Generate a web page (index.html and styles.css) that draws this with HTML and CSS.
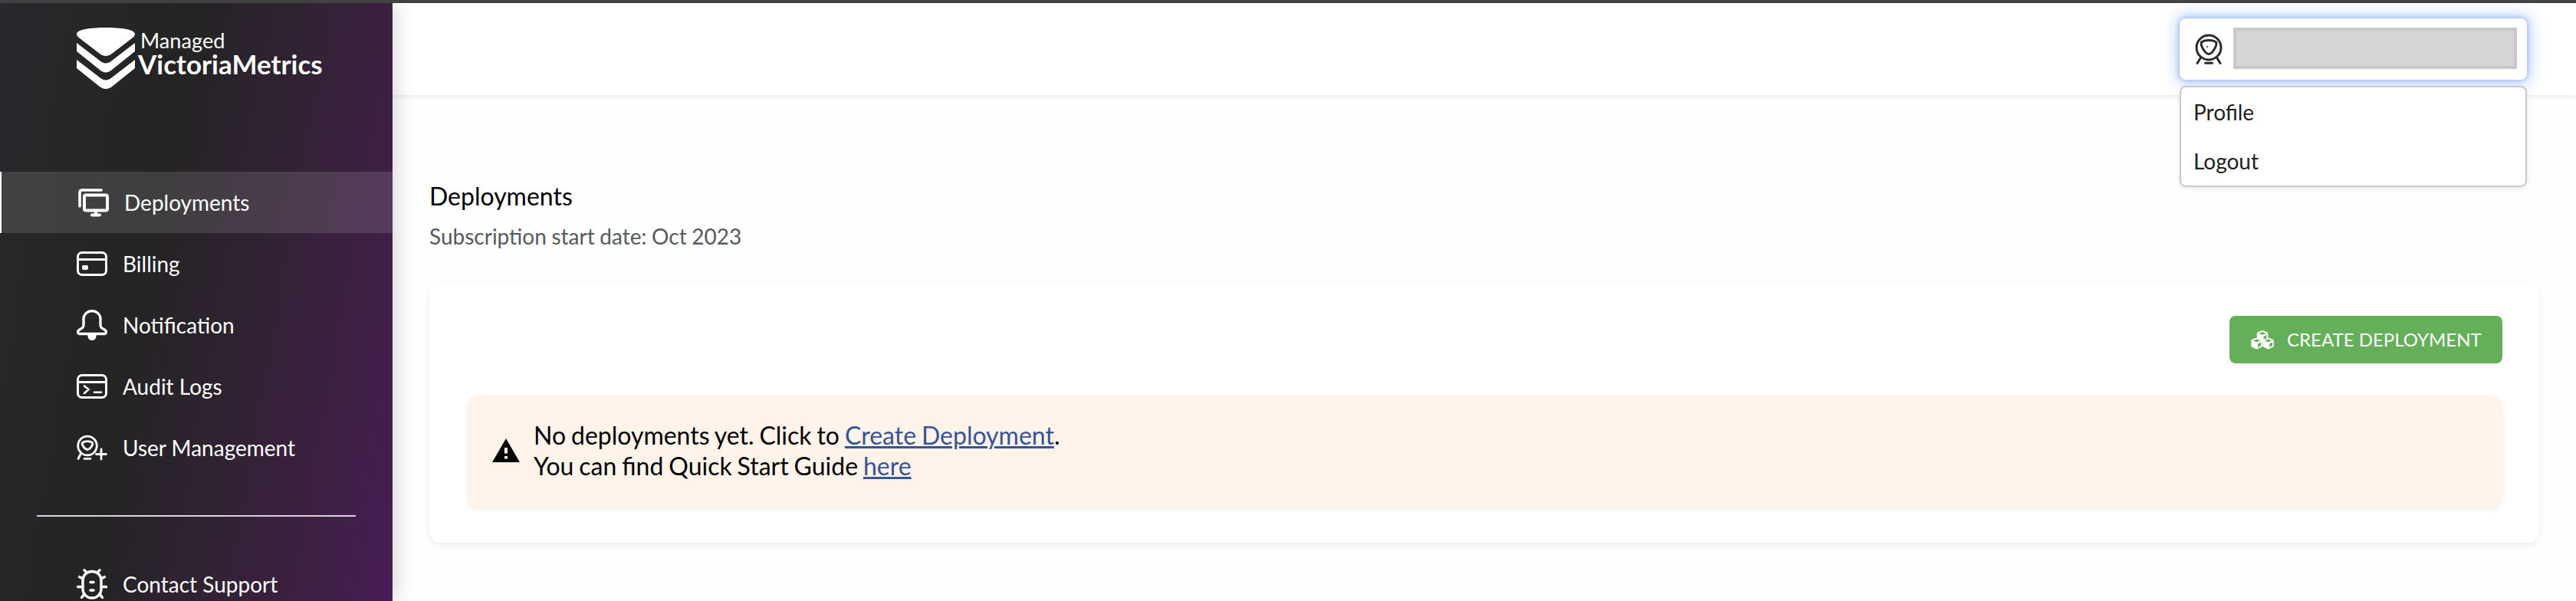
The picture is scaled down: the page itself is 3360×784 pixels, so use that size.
FILE: index.html
```html
<!DOCTYPE html>
<html lang="en">
<head>
<meta charset="utf-8">
<title>Managed VictoriaMetrics</title>
<link rel="stylesheet" href="styles.css">
</head>
<body>
<div class="app">
  <aside class="sidebar">
    <div class="brand">
      <svg class="brand-mark" viewBox="0 0 76 80" fill="#fff">
        <path d="M0 8C1 2 20 0 38 0s37 2 38 8c0 2-1 4-4 6L46 34c-5 4-11 4-16 0L4 14C1 12 0 10 0 8z"/>
        <path d="M0 20l30 23c5 4.500 11 4.500 16 0l30-23v11L46 55c-5 4.500-11 4.500-16 0L0 31z"/>
        <path d="M0 42l30 23c5 4.500 11 4.500 16 0l30-23v11L46 77c-5 4-11 4-16 0L0 53z"/>
      </svg>
      <div class="brand-name"><span class="brand-top">Managed</span><span class="brand-main">VictoriaMetrics</span></div>
    </div>
    <nav class="nav">
      <a class="nav-item active">
        <svg class="icon" viewBox="0 0 40 40" fill="none" stroke="#fff" stroke-width="4" stroke-linecap="round" stroke-linejoin="round"><path d="M2 25V7q0-3 3-3h25" stroke-width="3.600"/><rect x="8" y="10.500" width="30" height="20" rx="2"/><path d="M23 31v5M18 36.500h10"/></svg>
        <span>Deployments</span></a>
      <a class="nav-item">
        <svg class="icon" viewBox="0 0 40 40" fill="none" stroke="#fff" stroke-width="3"><rect x="1.500" y="5.500" width="37" height="29" rx="5.500"/><path d="M2 14.500h36"/><rect x="7" y="22" width="8" height="6" rx="2" fill="#fff" stroke="none"/></svg>
        <span>Billing</span></a>
      <a class="nav-item">
        <svg class="icon" viewBox="0 0 40 40" fill="none" stroke="#fff" stroke-width="3.300" stroke-linejoin="round"><path d="M9 20v-7.500C9 6 14 1.700 20 1.700S31 6 31 12.500V20c0 3 2 4.500 4.500 5.500 4.500 2 3.500 6 0 6H4.500c-3.500 0-4.500-4 0-6C7 24.500 9 23 9 20z"/><path d="M14.500 32h11v2.500a5.500 5.500 0 0 1-11 0z" fill="#fff" stroke="none"/></svg>
        <span>Notification</span></a>
      <a class="nav-item">
        <svg class="icon" viewBox="0 0 40 40" fill="none" stroke="#fff" stroke-width="3"><rect x="1.500" y="5.500" width="37" height="29" rx="5.500"/><path d="M2 14.500h36"/><path d="M10 19.500l5.500 4.500-5.500 5M23 27.800h9" stroke-width="2.600" stroke-linecap="round"/></svg>
        <span>Audit Logs</span></a>
      <a class="nav-item">
        <svg class="icon" viewBox="0 0 40 40" fill="none" stroke="#fff" stroke-width="2.800" stroke-linecap="round" stroke-linejoin="round"><circle cx="14" cy="17.500" r="12.300"/><path d="M7.500 13.500c3-2.500 10-2.500 13 0 1.500 2-3 9-6.500 9S6 15.500 7.500 13.500z"/><path d="M5.500 27.500L2 34.500M10 34.300h8M25.500 28.500h13M32 22v13"/></svg>
        <span>User Management</span></a>
    </nav>
    <hr class="divider">
    <nav class="nav">
      <a class="nav-item">
        <svg class="icon" viewBox="0 0 40 40" fill="none" stroke="#fff" stroke-width="3.400" stroke-linecap="round"><rect x="8" y="3.500" width="24" height="34.500" rx="11.500"/><path d="M13 5l-3-3.300M27 5l3-3.300M8 13l-4.500-2.500M32 13l4.500-2.500M8 23.500H1.500M32 23.500h7M10 33l-3.500 4.500M30 33l3.500 4.500M18 17.500h4M18 28h4"/></svg>
        <span>Contact Support</span></a>
    </nav>
  </aside>
  <div class="content">
    <header class="topbar">
      <div class="account">
        <button class="account-button">
          <svg class="account-icon" viewBox="0 0 36 42" fill="none" stroke="#2b2b2b" stroke-width="3" stroke-linecap="round"><circle cx="18" cy="19" r="16"/><path d="M8.500 12c4-3.500 15-3.500 19 0 2 4-5 15.500-9.500 15.500S6.500 16 8.500 12z"/><path d="M7 33l-4 6.500M29 33l4 6.500M13.500 39.300h9"/><circle cx="16" cy="18" r="1" fill="#2b2b2b" stroke="none"/></svg>
          <span class="account-name"></span>
        </button>
        <div class="menu"><a>Profile</a><a>Logout</a></div>
      </div>
    </header>
    <main class="main">
      <h1>Deployments</h1>
      <p class="sub">Subscription start date: Oct 2023</p>
      <section class="card">
        <button class="create">
          <svg class="cubes" viewBox="0 0 30 26">
            <defs><g id="cube"><path d="M0-7.500Q.5-7.500 6-5.200 7.300-4.600 7.300-3.500V3Q7.300 4 6.500 4.500L.8 7.300Q0 7.600-.8 7.300L-6.500 4.500Q-7.300 4-7.300 3v-6.500Q-7.300-4.600-6-5.200-.5-7.500 0-7.500z" fill="#fff"/><path d="M0-5.600L4.600-3.700 0-1.700-4.600-3.700zM1.600.4L5.500-1.400V2.800L1.600 4.900z" fill="#65af5a"/></g></defs>
            <use href="#cube" x="15" y="8.500"/><use href="#cube" x="7.500" y="18"/><use href="#cube" x="22.500" y="18"/>
          </svg>
          <span>CREATE DEPLOYMENT</span>
        </button>
        <div class="alert">
          <svg class="warn" viewBox="0 0 36 31"><path d="M18 0l18 31H0z" fill="#080808"/><path d="M16 12h4v7.500h-4zM16 23h4v3.500h-4z" fill="#fff3ea"/></svg>
          <div class="alert-text">No deployments yet. Click to <a>Create Deployment</a>.<br>You can find Quick Start Guide <a>here</a></div>
        </div>
      </section>
    </main>
  </div>
</div>
</body>
</html>
```
FILE: styles.css
```css
* { box-sizing: border-box; }
body { margin: 0; font-family: Lato, sans-serif; background: #fefefe; color: #000; }
button { font: inherit; border: 0; }
.app { display: flex; height: 784px; border-top: 4px solid #424242; overflow: hidden; }
.sidebar { flex: none; width: 512px; color: #fff; background: linear-gradient(100deg, #27292c 0%, #242424 38%, #38213c 75%, #481d55 100%); box-shadow: 4px 0 24px rgba(0,0,0,.17); z-index: 1; }
.brand { display: flex; height: 220px; padding: 32px 0 0 100px; }
.brand-mark { width: 76px; height: 80px; }
.brand-name { display: flex; flex-direction: column; padding-top: 2px; }
.brand-top { font-size: 27.200px; line-height: 29px; padding-left: 7px; }
.brand-main { font-size: 35px; line-height: 33px; font-weight: 700; padding-left: 4px; }
.nav-item { display: flex; align-items: center; height: 80px; padding-left: 100px; gap: 20px; font-size: 28px; }
.nav-item.active { background: rgba(255,255,255,.12); border-left: 2px solid #fff; }
.icon { width: 40px; height: 40px; flex: none; }
.divider { height: 2px; border: 0; margin: 48px 48px; background: #ddd0df; }
.content { flex: 1; display: flex; flex-direction: column; }
.topbar { height: 120px; background: #fff; display: flex; justify-content: flex-end; padding: 20px 64px 0 0; box-shadow: 0 2px 6px rgba(40,20,50,.09); }
.account { position: relative; width: 453px; height: 80px; z-index: 2; }
.account-button { display: flex; align-items: center; width: 100%; height: 80px; padding: 0 13px 0 20px; gap: 14px; background: #fff; border-radius: 8px; box-shadow: 0 0 6px 1px rgba(115,150,240,.6), 0 0 18px 6px rgba(145,190,255,.5); }
.account-icon { width: 36px; height: 42px; flex: none; }
.account-name { flex: 1; height: 54px; background: #d5d5d5; border: 4px solid #c8c8c8; margin-bottom: 2px; }
.menu { position: absolute; top: 88px; left: 0; width: 453px; height: 132px; background: #fff; border: 2px solid #cbc8cd; border-radius: 8px; box-shadow: 0 2px 8px rgba(0,0,0,.08); }
.menu a { display: block; height: 64px; line-height: 64px; padding-left: 16px; font-size: 28px; color: #212121; }
.main { padding: 109px 48px 0; }
h1 { margin: 0; font-size: 32px; line-height: 46px; font-weight: 400; }
.sub { margin: 0; padding-top: 9px; font-size: 28px; line-height: 40px; color: #555b5c; word-spacing: -.6px; }
.card { margin-top: 40px; height: 340px; padding: 44px 48px 0; display: flex; flex-direction: column; align-items: flex-end; background: #fff; border-radius: 16px; box-shadow: 0 4px 10px rgba(0,0,0,.07); }
.create { display: flex; align-items: center; width: 356px; height: 62px; padding: 0 0 0 28px; gap: 17px; border-radius: 8px; background: #65af5a; color: #fff; font-size: 24px; }
.create span { margin-top: -2px; }
.cubes { width: 30px; height: 26px; flex: none; }
.alert { display: flex; align-self: stretch; height: 147px; margin: 42px 0 0 2px; padding: 32px 0 0 32px; gap: 18px; background: #fff3ea; border-radius: 14px; box-shadow: 0 2px 6px rgba(0,0,0,.07); }
.warn { width: 36px; height: 31px; margin-top: 24px; flex: none; }
.alert-text { font-size: 32px; line-height: 40px; word-spacing: -1.3px; }
.alert-text a { color: #35549a; text-decoration: underline; text-decoration-thickness: 3px; }
```
